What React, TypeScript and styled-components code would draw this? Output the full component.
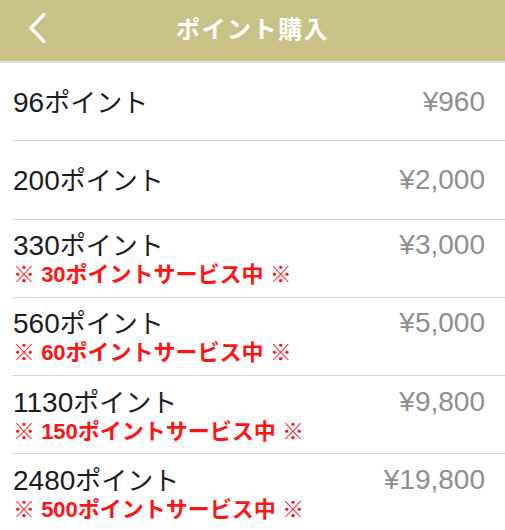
import styled, { createGlobalStyle } from 'styled-components';

const GlobalStyle = createGlobalStyle`
  body {
    margin: 0;
    background: #fff;
    font-family: "Liberation Sans", "Noto Sans CJK JP", sans-serif;
  }
`;

const NavBar = styled.header`
  display: grid;
  grid-template-columns: 1fr auto 1fr;
  align-items: center;
  height: 63px;
  padding-bottom: 6px;
  box-sizing: border-box;
  background-color: #c8c286;
  border-bottom: 2px solid #deddd6;
`;

const BackButton = styled.button`
  justify-self: start;
  display: flex;
  align-items: center;
  margin-left: 27px;
  padding: 0;
  border: none;
  background: none;
  cursor: pointer;
`;

const Title = styled.h1`
  margin: 0;
  color: #fff;
  font-size: 24px;
  font-weight: 700;
  letter-spacing: 1.5px;
  font-family: "Noto Sans CJK JP", sans-serif;
`;

const List = styled.ul`
  list-style: none;
  margin: 0;
  padding: 0;
`;

const Row = styled.li`
  display: flex;
  align-items: center;
  height: 77.25px;
  margin-left: 12px;
  padding: 0 20px 0 1px;
  border-bottom: 1px solid #d9d9d9;
`;

const Info = styled.div`
  flex: 1;
  display: flex;
  flex-direction: column;
`;

const MainLine = styled.div`
  display: flex;
  justify-content: space-between;
  align-items: center;
  line-height: 32px;
`;

const Label = styled.span`
  font-size: 28px;
  color: #1c1c1c;
`;

const Unit = styled.span`
  font-family: "Noto Sans CJK JP", sans-serif;
  font-size: 26px;
`;

const Price = styled.span`
  font-size: 28px;
  color: #8e8e93;
`;

const Bonus = styled.div`
  line-height: 26px;
  font-size: 22px;
  font-weight: 700;
  color: #ff1414;
`;

type Plan = { points: number; price: string; bonus?: number };

const plans: Plan[] = [
  { points: 96, price: '¥960' },
  { points: 200, price: '¥2,000' },
  { points: 330, price: '¥3,000', bonus: 30 },
  { points: 560, price: '¥5,000', bonus: 60 },
  { points: 1130, price: '¥9,800', bonus: 150 },
  { points: 2480, price: '¥19,800', bonus: 500 },
];

const App = () => {
  return (
    <>
      <GlobalStyle />
      <NavBar>
        <BackButton aria-label='戻る'>
          <svg width='20' height='32' viewBox='0 0 20 32'>
            <path d='M17 2.5 L4 16 L17 29.5' fill='none' stroke='#fff' strokeWidth='3.4' strokeLinecap='round' strokeLinejoin='round' />
          </svg>
        </BackButton>
        <Title>ポイント購入</Title>
        <span />
      </NavBar>
      <List>
        {plans.map((p) => (
          <Row key={p.points}>
            <Info>
              <MainLine>
                <Label>
                  {p.points}
                  <Unit>ポイント</Unit>
                </Label>
                <Price>{p.price}</Price>
              </MainLine>
              {p.bonus && <Bonus>※ {p.bonus}ポイントサービス中 ※</Bonus>}
            </Info>
          </Row>
        ))}
      </List>
    </>
  );
};

export default App;
